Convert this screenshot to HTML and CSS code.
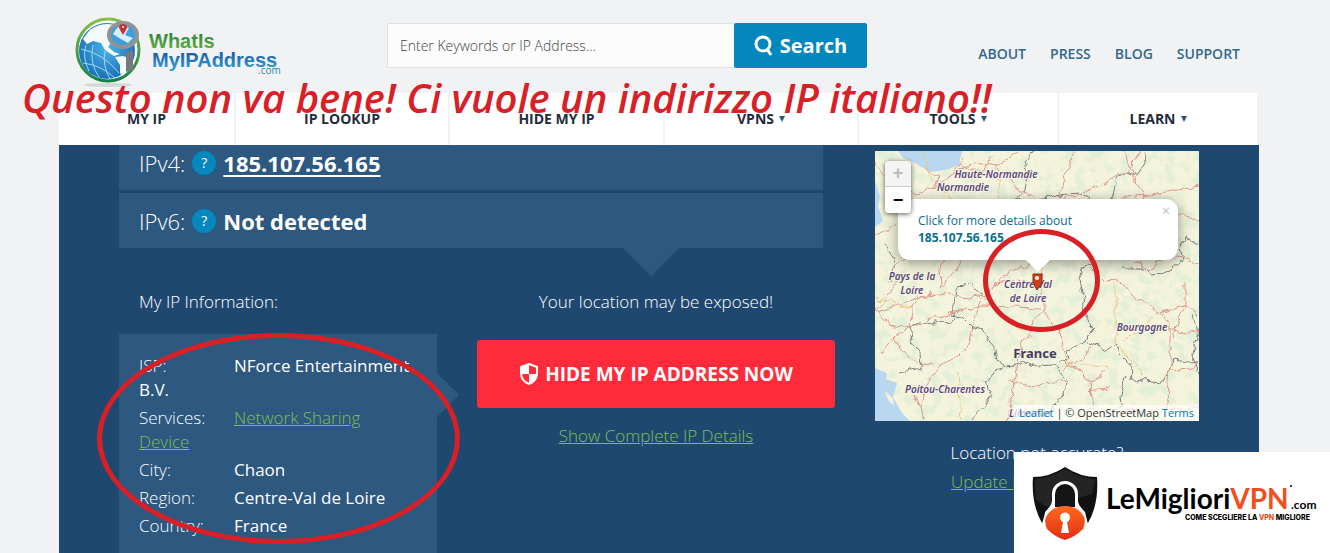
FILE: index.html
```
<!DOCTYPE html>
<html lang="en">

<head>
    <meta charset="UTF-8">
    <meta name="viewport" content="width=device-width, initial-scale=1.0">
    <title>What Is My IP Address</title>
    <link rel="stylesheet" href="styles.css">
</head>

<body>
    <header class="header container">
        <a class="logo" href="#" aria-label="WhatIsMyIPAddress.com">
            <svg width="212" height="76" viewBox="0 0 212 76">
                <defs>
                    <linearGradient id="ring" x1="0" y1="0" x2="0" y2="1">
                        <stop offset="0" stop-color="#86bf4c" />
                        <stop offset="1" stop-color="#128048" />
                    </linearGradient>
                    <radialGradient id="globe" cx=".5" cy=".45" r=".6">
                        <stop offset="0" stop-color="#4db4e8" />
                        <stop offset="1" stop-color="#1668b4" />
                    </radialGradient>
                    <linearGradient id="green" x1="0" y1="0" x2="0" y2="1">
                        <stop offset=".2" stop-color="#2f8a3c" />
                        <stop offset="1" stop-color="#6cb544" />
                    </linearGradient>
                    <linearGradient id="blue" x1="0" y1="0" x2="0" y2="1">
                        <stop offset=".2" stop-color="#1b5fa8" />
                        <stop offset="1" stop-color="#39a5dc" />
                    </linearGradient>
                    <clipPath id="globeClip"><circle cx="34" cy="41" r="28" /></clipPath>
                </defs>
                <ellipse cx="35" cy="74" rx="24" ry="2" fill="#d3d8d6" />
                <circle cx="35" cy="39" r="31" fill="#fff" stroke="url(#ring)" stroke-width="3" />
                <circle cx="34" cy="40" r="28" fill="url(#globe)" />
                <g clip-path="url(#globeClip)">
                    <path d="M10 28 18 17 35 10 46 14 40 24 46 30 42 34 38 32 35 36 41 41 47 43 41 45 32 39 28 32 20 30 14 33Z" fill="#f3fafd" />
                    <path d="M42 46 50 45 64 50 62 62 52 69 47 62 47 54Z" fill="#f3fafd" />
                    <path d="M8 38Q30 42 46 62M10 52Q28 54 42 67M20 34Q16 52 26 66M32 40Q29 54 37 68M13 34Q9 46 16 60" fill="none" stroke="#9dd8f3" stroke-width="1" />
                </g>
                <path d="M53 42 60 39V59L53 61Z" fill="#77797c" />
                <ellipse cx="50" cy="24" rx="14" ry="12" fill="#3f9edb" stroke="#919397" stroke-width="4" />
                <path d="M40 23Q44 15 50 14L56 17 52 24 60 27 55 32 46 27Z" fill="#d9effa" />
                <path d="M50 24 46 17A4 4 0 1 1 54 17Z" fill="#cf2f2c" />
                <circle cx="50" cy="16" r="1" fill="#fff" />
                <text class="logo-text" x="76" y="37" fill="url(#green)">WhatIs</text>
                <text class="logo-text" x="79" y="56" fill="url(#blue)">MyIPAddress</text>
                <text class="logo-com" x="185" y="63" fill="#1b87b0">.com</text>
            </svg>
        </a>
        <form class="search">
            <input class="search-input" type="text" aria-label="Search" placeholder="Enter Keywords or IP Address...">
            <button class="search-button" type="button">
                <svg width="20" height="22" viewBox="0 0 20 22">
                    <circle cx="9" cy="9" r="7" fill="none" stroke="currentColor" stroke-width="3" />
                    <path d="M13 14 17 20" stroke="currentColor" stroke-width="3" />
                </svg>
                Search
            </button>
        </form>
        <div class="top-links">
            <a href="#">ABOUT</a>
            <a href="#">PRESS</a>
            <a href="#">BLOG</a>
            <a href="#">SUPPORT</a>
        </div>
    </header>

    <nav class="nav container">
        <a href="#">MY IP</a>
        <a href="#">IP LOOKUP</a>
        <a href="#">HIDE MY IP</a>
        <a href="#">VPNS <span class="arrow"></span></a>
        <a href="#">TOOLS <span class="arrow"></span></a>
        <a href="#">LEARN <span class="arrow"></span></a>
    </nav>

    <main class="main container">
        <section class="left">
            <div class="ip-rows">
                <div class="ip-row ip-row-first">IPv4: <button class="help" type="button">?</button> <a href="#">185.107.56.165</a></div>
                <div class="ip-row">IPv6: <button class="help" type="button">?</button> <b>Not detected</b></div>
            </div>
            <div class="details">
                <div class="info">
                    <p class="info-title">My IP Information:</p>
                    <div class="info-box">
                        <ul class="info-list">
                            <li><span class="label">ISP:</span><span>NForce Entertainment B.V.</span></li>
                            <li><span class="label">Services:</span><a href="#">Network Sharing Device</a></li>
                            <li><span class="label">City:</span><span>Chaon</span></li>
                            <li><span class="label">Region:</span><span>Centre-Val de Loire</span></li>
                            <li><span class="label">Country:</span><span>France</span></li>
                        </ul>
                        <div class="mark mark-info"></div>
                    </div>
                </div>
                <div class="exposed">
                    <p>Your location may be exposed!</p>
                    <button class="hide-button" type="button">
                        <svg width="20" height="24" viewBox="0 0 20 24">
                            <path d="M10 2 18 5V11Q18 19 10 22 2 19 2 11V5Z" fill="none" stroke="currentColor" stroke-width="2" />
                            <path d="M10 2V12H2V5ZM10 12H18Q17 19 10 22Z" fill="currentColor" />
                        </svg>
                        HIDE MY IP ADDRESS NOW
                    </button>
                    <a class="green-link" href="#">Show Complete IP Details</a>
                </div>
            </div>
        </section>

        <aside class="right">
            <div class="map">
                <svg class="map-svg" viewBox="0 0 324 270" preserveAspectRatio="xMidYMid slice">
                    <defs>
                        <!-- woodland patches -->
                        <filter id="woods" x="0" y="0" width="1" height="1">
                            <feTurbulence type="fractalNoise" baseFrequency=".09" numOctaves="5" seed="8" />
                            <feColorMatrix values="0 0 0 0 .77  0 0 0 0 .86  0 0 0 0 .67  6 0 0 0 -3" />
                        </filter>
                        <!-- makes roads and borders less straight -->
                        <filter id="wiggle" x="0" y="0" width="1" height="1">
                            <feTurbulence type="fractalNoise" baseFrequency=".08" numOctaves="3" seed="3" />
                            <feDisplacementMap in="SourceGraphic" scale="10" xChannelSelector="R" yChannelSelector="G" />
                        </filter>
                    </defs>
                    <rect width="324" height="270" fill="#f4f3dc" />
                    <rect width="324" height="270" filter="url(#woods)" />
                    <g fill="#b9d7ee">
                        <path d="M23 0H87L84 14 70 19 55 21 45 15 38 11 28 7Z" />
                        <path d="M0 30 5 45 3 55 8 70 0 76Z" />
                        <path d="M0 217 12 222 11 228 22 232 18 246 27 262 35 270H0Z" />
                    </g>
                    <path d="M10 240 18 247 19 255 13 249Z" fill="#f4f1d8" />
                    <g fill="none" stroke-width="1" filter="url(#wiggle)">
                        <g stroke="#808080">
                            <path d="M33 177 45 171 60 173 66 170 75 172 80 165 77 156 83 145 84 136 94 134 108 144" />
                            <path d="M75 163 87 165 98 176 108 179 114 190 122 199 124 209 129 216 142 215 150 211 162 215 178 214 184 219 192 230 190 243 180 252 178 260" />
                            <path d="M178 214 185 208 194 207 192 198 202 195 211 190 220 194 230 198 240 192 245 202 254 211 256 228 262 231 277 229 291 231 294 222 298 209 315 211 324 210" />
                            <path d="M211 190 216 178 211 163 209 148 203 130 206 118 220 112M33 177 38 191 46 202 47 216M23 222 47 218M251 225 245 243 246 254 230 262M129 216 119 220 111 233 116 244 106 258 98 270" />
                            <path d="M142 45 150 38 154 24 150 10 158 0M142 45 156 52 180 45 202 42 215 48 234 55 242 30 248 22 262 24 272 9 268 0M234 55 244 65 239 75M248 116 264 116 277 123 296 118 306 111 303 96 310 86 324 93M16 130 20 110 10 95M318 165 324 190 319 205 324 222" />
                        </g>
                        <g stroke="#df958b">
                            <path d="M0 159 18 156 45 146 62 142 92 147 108 144 130 125 160 110M5 159 14 174 33 177 42 149 60 142M33 177 75 162 110 155 165 157M0 159 13 145 22 128 18 116" />
                            <path d="M108 144 98 176 92 199 62 217 52 232 45 256 48 270M33 177 20 186 24 197 45 214 56 213M20 186 8 200 4 201M38 245 45 256" />
                            <path d="M167 159 152 182 142 212 133 269M167 159 185 179 192 212 205 222 215 229 217 270M167 159V110M133 232 162 235 192 230M215 229 232 222M230 262 324 257M215 240 235 235" />
                            <path d="M245 129 262 149 285 162 295 176V216L292 270M285 162 310 154 324 165M295 176 308 182 324 178M310 130V154L302 171 298 186M295 220 318 217 324 209M274 120 290 105 324 112M190 220 218 195" />
                            <path d="M40 43 60 37 78 24 88 5M78 24 100 12 122 15 145 3M60 37 64 26 52 15M122 15 138 33 160 49 178 50 195 46 225 35 252 20 263 32 270 45 324 35M252 20 265 0M185 48 190 25 198 0M84 14 92 20 108 20 118 4M145 50 128 72M240 48 270 45M270 45 272 60M263 32 248 0M0 12 15 28 40 43M0 85 12 80 22 72M303 62 324 72M18 116 28 106 35 92" />
                            <path d="M65 136 80 120 88 105M110 144 120 132 145 129 160 134M215 115 230 130 245 129M260 110 274 120M75 104 65 118 66 135" />
                        </g>
                        <g stroke="#edc489">
                            <path d="M48 0 60 35 100 62M122 15 126 60M108 144 155 187M240 130 240 190 270 225M192 212 235 218M82 220 85 270M0 146 40 158M280 165 250 190" />
                        </g>
                    </g>
                    <g class="map-label">
                        <text x="121" y="27">Haute-Normandie</text>
                        <text x="88" y="40">Normandie</text>
                        <text x="37" y="129">Pays de la</text>
                        <text x="37" y="143">Loire</text>
                        <text x="153" y="137">Centre-Val</text>
                        <text x="153" y="151">de Loire</text>
                        <text x="267" y="180">Bourgogne</text>
                        <text x="70" y="242">Poitou-Charentes</text>
                        <text x="155" y="266">Limousin</text>
                    </g>
                    <text class="map-country" x="160" y="207">France</text>
                    <path d="M162 139 158 132V123H167V132Z" fill="#c9401a" stroke="#8f2c10" />
                    <circle cx="162" cy="127" r="2" fill="#fff" />
                </svg>
                <div class="popup">
                    <a href="#">Click for more details about<br><b>185.107.56.165</b></a>
                    <button class="popup-close" type="button">×</button>
                </div>
                <div class="zoom">
                    <button type="button" disabled>+</button>
                    <button type="button">−</button>
                </div>
                <div class="attribution"><a href="#">Leaflet</a> | © OpenStreetMap <a href="#">Terms</a></div>
                <div class="mark mark-map"></div>
            </div>
            <p class="accurate">Location not accurate?</p>
            <a class="green-link" href="#">Update My IP Location</a>
        </aside>
    </main>

    <p class="note">Questo non va bene! Ci vuole un indirizzo IP italiano!!</p>

    <div class="brand">
        <svg width="316" height="101" viewBox="0 0 316 101">
            <defs>
                <linearGradient id="lock" x1="0" y1="0" x2="0" y2="1">
                    <stop offset="0" stop-color="#ff6a1f" />
                    <stop offset="1" stop-color="#e32d12" />
                </linearGradient>
            </defs>
            <path d="M51 15Q66 25 83 25 85 52 74 71L51 88 28 71Q17 52 19 25 36 25 51 15Z" fill="#111" />
            <path d="M51 17Q65 26 81 27L78 42 33 55 22 48Q20 38 21 27 37 26 51 17Z" fill="#242424" />
            <path d="M31 61V60Q38 53 38 49V42A13 13 0 0 1 64 42V49Q64 53 71 60L74 72 51 90 28 72Z" fill="#fff" />
            <path d="M41 55V42A10 10 0 0 1 61 42V55Z" fill="#151515" />
            <path d="M51 54Q64 54 70 65 72 70 69 77 61 85 51 88 41 85 33 77 30 70 32 65 38 54 51 54Z" fill="url(#lock)" />
            <path d="M49 70A5 5 0 1 1 53 70L55 81H47Z" fill="#fff" />
            <text class="brand-name" x="106" y="57" text-anchor="start"><tspan x="92">LeMigliori</tspan><tspan fill="#f04e1c">VPN</tspan></text>
            <text class="brand-com" x="277" y="57">.com</text>
            <text class="brand-tag" x="171" y="68">COME SCEGLIERE LA <tspan fill="#f04e1c">VPN</tspan> MIGLIORE</text>
            <circle cx="277" cy="34" r="1" />
        </svg>
    </div>
</body>

</html>
```

FILE: styles.css
```
* {
    box-sizing: border-box;
}

body {
    display: flex;
    flex-direction: column;
    height: 100vh;
    margin: 0;
    padding-right: 12px;
    overflow: hidden;
    background-color: #f1f2f4;
    font-family: "Open Sans", "Noto Sans", sans-serif;
    font-size: 17px;
    font-weight: 300;
    line-height: 24px;
    color: #fff;
}

p {
    margin: 0;
}

button {
    font-family: inherit;
    border: none;
    cursor: pointer;
}

.container {
    width: 100%;
    max-width: 1200px;
    margin: 0 auto;
}

/* header */
.header {
    display: flex;
    flex-shrink: 0;
    align-items: flex-start;
    height: 93px;
    padding: 11px 19px 0 14px;
}

.logo svg {
    display: block;
}

.logo-text {
    font: bold 20px "Liberation Sans", Arial, sans-serif;
}

.logo-com {
    font: 10px "Open Sans", sans-serif;
}

.search {
    display: flex;
    width: 480px;
    height: 45px;
    margin: 12px 0 0 102px;
}

.search-input {
    flex: 1;
    min-width: 0;
    padding: 0 12px;
    border: 1px solid #dfe2e5;
    border-right: none;
    background-color: #fcfcfc;
    font: 300 14px "Open Sans", sans-serif;
}

.search-input::placeholder {
    color: #444;
}

.search-button {
    display: flex;
    align-items: center;
    justify-content: center;
    gap: 6px;
    width: 133px;
    border-radius: 2px;
    background-color: #0387bd;
    color: #fff;
    font-size: 20px;
    font-weight: 700;
}

.top-links {
    display: flex;
    gap: 24px;
    margin: 31px 0 0 auto;
}

.top-links a {
    color: #33698c;
    font-size: 14px;
    font-weight: 600;
    text-decoration: none;
}

/* menu */
.nav {
    display: grid;
    flex-shrink: 0;
    grid-template-columns: 177fr 214fr 215fr 194fr 200fr 200fr;
    height: 52px;
    background-color: #fff;
}

.nav a {
    display: flex;
    align-items: center;
    justify-content: center;
    gap: 5px;
    border-right: 2px solid #f1f2f4;
    color: #1f2d3a;
    font-size: 14px;
    font-weight: 700;
    text-decoration: none;
}

.arrow {
    border: 3px solid transparent;
    border-top: 6px solid #2c5878;
    border-bottom: none;
}

/* content */
.main {
    display: grid;
    flex: 1;
    grid-template-columns: 1fr 324px;
    gap: 40px;
    min-height: 0;
    padding: 0 60px;
    background-color: #1f4871;
}

.left {
    display: flex;
    flex-direction: column;
}

.ip-rows {
    position: relative;
    margin-right: 12px;
}

.ip-rows::after {
    content: "";
    position: absolute;
    top: 100%;
    left: 504px;
    border: 28px solid transparent;
    border-top-color: #2d587f;
    border-bottom: none;
}

.ip-row {
    display: flex;
    align-items: center;
    gap: 7px;
    height: 55px;
    padding-left: 20px;
    background-color: #2d587f;
    font-size: 22px;
}

.ip-row-first {
    height: 45px;
    margin-bottom: 3px;
    padding-bottom: 10px;
}

.ip-row a,
.ip-row b {
    color: #fff;
    font-weight: 700;
    text-underline-offset: 3px;
}

.help {
    width: 24px;
    height: 24px;
    padding: 0;
    border-radius: 50%;
    background-color: #0387bd;
    color: #fff;
    font-size: 14px;
}

.details {
    display: grid;
    flex: 1;
    grid-template-columns: 318px 1fr;
    gap: 40px;
    padding-top: 42px;
}

.info {
    display: flex;
    flex-direction: column;
}

.info-title {
    padding: 0 20px 20px;
}

.info-box {
    position: relative;
    flex: 1;
    padding: 20px 26px 0 20px;
    background-color: #2d587f;
}

.info-box::after {
    content: "";
    position: absolute;
    top: 39px;
    left: 100%;
    border: 22px solid transparent;
    border-left-color: #2d587f;
    border-right: none;
}

.info-list {
    margin: 0;
    padding: 0;
    list-style: none;
}

.info-list li {
    margin-bottom: 4px;
    font-weight: 400;
}

.label {
    display: inline-block;
    width: 95px;
    font-weight: 300;
}

.info-list a,
.green-link {
    color: #7cc04f;
    font-weight: 300;
}

.exposed {
    text-align: center;
}

.hide-button {
    display: flex;
    align-items: center;
    justify-content: center;
    gap: 6px;
    width: 100%;
    height: 68px;
    margin: 26px 0 16px;
    border-radius: 3px;
    background-color: #ff2a3a;
    color: #fff;
    font-size: 19px;
    font-weight: 700;
}

/* map */
.right {
    padding-top: 6px;
    text-align: center;
}

.map {
    position: relative;
    height: 270px;
    margin-bottom: 20px;
    text-align: left;
}

.map-svg {
    display: block;
    width: 100%;
    height: 100%;
}

.map-label {
    fill: #59477a;
    stroke: #f8f5e6;
    stroke-width: 2px;
    paint-order: stroke;
    font: italic 600 10px "Noto Sans", sans-serif;
    text-anchor: middle;
}

.map-country {
    fill: #463a62;
    font: 700 13px "Noto Sans", sans-serif;
    text-anchor: middle;
}

.zoom {
    position: absolute;
    top: 10px;
    left: 10px;
    width: 26px;
    border-radius: 4px;
    overflow: hidden;
    box-shadow: 0 1px 5px rgba(0, 0, 0, 0.65);
}

.zoom button {
    display: block;
    width: 26px;
    height: 26px;
    padding: 0;
    background-color: #fff;
    color: #000;
    font: bold 18px "Liberation Sans", sans-serif;
}

.zoom button:disabled {
    border-bottom: 1px solid #ccc;
    background-color: #f4f4f4;
    color: #bbb;
}

.popup {
    position: absolute;
    top: 48px;
    left: 23px;
    width: 280px;
    padding: 13px 20px 14px;
    border-radius: 12px;
    background-color: #fff;
    box-shadow: 0 3px 14px rgba(0, 0, 0, 0.4);
    font-size: 12px;
    line-height: 17px;
}

.popup::after {
    content: "";
    position: absolute;
    top: 100%;
    left: 128px;
    border: 12px solid transparent;
    border-top-color: #fff;
    border-bottom: none;
}

.popup a {
    color: #0b6d8c;
    font-weight: 400;
    text-decoration: none;
}

.popup-close {
    position: absolute;
    top: 2px;
    right: 4px;
    padding: 0 4px;
    background: none;
    color: #bbb;
    font-size: 14px;
}

.attribution {
    position: absolute;
    right: 0;
    bottom: 0;
    padding: 0 5px;
    background-color: rgba(255, 255, 255, 0.7);
    color: #333;
    font-size: 11px;
    font-weight: 400;
    line-height: 16px;
}

.attribution a {
    color: #0078a8;
    text-decoration: none;
}

.accurate {
    margin-bottom: 5px;
}

/* red marker notes over the page */
.mark {
    position: absolute;
    z-index: 1;
    border: 5px solid #d92027;
    border-radius: 50%;
}

.mark-info {
    top: -1px;
    left: -22px;
    width: 363px;
    height: 211px;
}

.mark-map {
    top: 78px;
    left: 108px;
    width: 117px;
    height: 103px;
}

.note {
    position: absolute;
    top: 73px;
    left: 22px;
    color: #d92027;
    font: italic 600 40px/50px "Open Sans", sans-serif;
    white-space: nowrap;
}

.brand {
    position: absolute;
    z-index: 2;
    right: 0;
    bottom: 0;
    background-color: #fff;
}

.brand svg {
    display: block;
}

.brand-name {
    font: bold 28px Lato, sans-serif;
}

.brand-com {
    font: bold 12px Lato, sans-serif;
}

.brand-tag {
    font: 800 7px Inter, sans-serif;
}
```
